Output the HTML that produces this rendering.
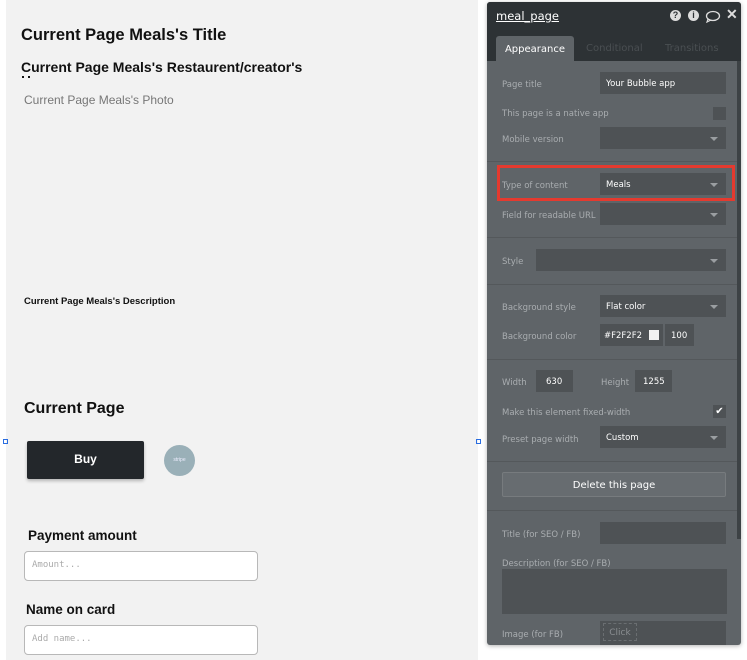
<!DOCTYPE html>
<html><head><style>
*{box-sizing:border-box;margin:0;padding:0}
body{width:747px;height:660px;background:#fff;position:relative;overflow:hidden;font-family:"Liberation Sans",sans-serif}
.a{position:absolute}
#canvas{left:6px;top:0;width:472px;height:660px;background:#f2f2f2}
#panel{left:487px;top:2px;width:254px;height:643px;background:#5f6468;border-radius:3px;overflow:hidden;box-shadow:0 1px 4px rgba(0,0,0,.3)}
.l{font-size:8.5px;color:#a9adb0;font-family:"DejaVu Sans",sans-serif;margin-top:2px}
.in{background:#4e5255;height:22px;font-size:8.5px;color:#fff;font-family:"DejaVu Sans",sans-serif;padding-left:6px;line-height:24px}
.dd::after{content:"";position:absolute;right:8px;top:10px;border:4px solid transparent;border-top:4px solid #9a9ea1;border-bottom:0}
.hr{left:0;width:250px;height:1px;background:#54585b}
.inp{background:#fff;border:1px solid #b8b8b8;border-radius:4px;font-family:"DejaVu Sans Mono",monospace;font-size:9px;color:#aaa;padding-left:7px;line-height:26px}
</style></head><body>
<div id="canvas" class="a"></div>
<div class="a" style="left:21px;top:26px;font-size:16.5px;font-weight:bold;color:#111">Current Page Meals's Title</div>
<div class="a" style="left:21px;top:59px;font-size:14px;font-weight:bold;color:#111;height:17px;overflow:hidden;width:300px;white-space:nowrap">Current Page Meals's Restaurent/creator's</div>
<div class="a" style="left:22px;top:76px;width:2px;height:2px;background:#111"></div>
<div class="a" style="left:28px;top:76px;width:2px;height:2px;background:#111"></div>
<div class="a" style="left:24px;top:93px;font-size:12px;color:#777">Current Page Meals's Photo</div>
<div class="a" style="left:24px;top:296px;font-size:9.5px;font-weight:bold;color:#111">Current Page Meals's Description</div>
<div class="a" style="left:24px;top:400px;font-size:16px;font-weight:bold;color:#111">Current Page</div>
<div class="a" style="left:3px;top:439px;width:5px;height:5px;border:1px solid #2a6de0"></div>
<div class="a" style="left:476px;top:439px;width:5px;height:5px;border:1px solid #2a6de0"></div>
<div class="a" style="left:27px;top:441px;width:117px;height:38px;background:#23272b;border-radius:2px;box-shadow:0 2px 3px rgba(0,0,0,.25);color:#fff;font-weight:bold;font-size:12px;text-align:center;line-height:36px">Buy</div>
<div class="a" style="left:164px;top:445px;width:31px;height:31px;border-radius:50%;background:#9ab0b8;color:#eef;font-size:5px;text-align:center;line-height:31px">stripe</div>
<div class="a" style="left:28px;top:528px;font-size:13.5px;font-weight:bold;color:#111">Payment amount</div>
<div class="a inp" style="left:24px;top:551px;width:234px;height:30px">Amount...</div>
<div class="a" style="left:26px;top:602px;font-size:13.5px;font-weight:bold;color:#111">Name on card</div>
<div class="a inp" style="left:24px;top:625px;width:234px;height:30px">Add name...</div>

<div id="panel" class="a">
<div class="a" style="left:0;top:0;width:254px;height:59px;background:#2d3235"></div>
<div class="a" style="left:9px;top:7px;font-size:11.5px;color:#fff;text-decoration:underline;font-family:'DejaVu Sans',sans-serif">meal_page</div>
<div class="a" style="left:183px;top:8px;width:11px;height:11px;border-radius:50%;background:#ddd;color:#2d3235;font-size:9px;font-weight:bold;text-align:center;line-height:11px">?</div>
<div class="a" style="left:201px;top:8px;width:11px;height:11px;border-radius:50%;background:#ddd;color:#2d3235;font-size:9px;font-weight:bold;text-align:center;line-height:11px">i</div>
<svg class="a" style="left:218px;top:8px" width="16" height="13"><ellipse cx="8" cy="6" rx="6.5" ry="4.5" fill="none" stroke="#ddd" stroke-width="1.3"/><path d="M3 9 L2 12 L6 10" fill="none" stroke="#ddd" stroke-width="1.2"/></svg>
<div class="a" style="left:239px;top:4px;font-size:14px;color:#ddd;font-weight:bold">✕</div>
<div class="a" style="left:9px;top:34px;width:78px;height:25px;background:#5f6468;border-radius:3px 3px 0 0;color:#fff;font-size:10px;text-align:center;line-height:27px;font-family:'DejaVu Sans',sans-serif">Appearance</div>
<div class="a" style="left:99px;top:41px;font-size:10px;color:#4a4f52;font-family:'DejaVu Sans',sans-serif">Conditional</div>
<div class="a" style="left:178px;top:41px;font-size:10px;color:#4a4f52;font-family:'DejaVu Sans',sans-serif">Transitions</div>
<div class="a" style="left:250px;top:59px;width:4px;height:478px;background:#3d4245"></div>

<div class="a l" style="left:15px;top:76px">Page title</div>
<div class="a in" style="left:113px;top:70px;width:126px">Your Bubble app</div>
<div class="a l" style="left:15px;top:105px">This page is a native app</div>
<div class="a" style="left:226px;top:105px;width:13px;height:13px;background:#4e5255"></div>
<div class="a l" style="left:15px;top:131px">Mobile version</div>
<div class="a in dd" style="left:113px;top:125px;width:126px"></div>
<div class="a hr" style="top:159px"></div>
<div class="a" style="left:10px;top:163px;width:238px;height:36px;border:3px solid #e53a2f"></div>
<div class="a l" style="left:15px;top:177px">Type of content</div>
<div class="a in dd" style="left:113px;top:171px;width:126px">Meals</div>
<div class="a l" style="left:15px;top:207px">Field for readable URL</div>
<div class="a in dd" style="left:113px;top:201px;width:126px"></div>
<div class="a hr" style="top:235px"></div>
<div class="a l" style="left:15px;top:253px">Style</div>
<div class="a in dd" style="left:49px;top:247px;width:190px"></div>
<div class="a hr" style="top:282px"></div>
<div class="a l" style="left:15px;top:299px">Background style</div>
<div class="a in dd" style="left:113px;top:293px;width:126px">Flat color</div>
<div class="a l" style="left:15px;top:328px">Background color</div>
<div class="a in" style="left:113px;top:322px;width:63px;padding-left:4px">#F2F2F2</div>
<div class="a" style="left:162px;top:328px;width:10px;height:10px;background:#f2f2f2"></div>
<div class="a in" style="left:178px;top:322px;width:29px">100</div>
<div class="a hr" style="top:357px"></div>
<div class="a l" style="left:15px;top:374px">Width</div>
<div class="a in" style="left:49px;top:368px;width:37px;padding-left:10px">630</div>
<div class="a l" style="left:114px;top:374px">Height</div>
<div class="a in" style="left:148px;top:368px;width:37px;padding-left:8px">1255</div>
<div class="a l" style="left:15px;top:404px">Make this element fixed-width</div>
<div class="a" style="left:226px;top:403px;width:13px;height:13px;background:#4e5255;color:#fff;font-size:10px;text-align:center;line-height:13px">✔</div>
<div class="a l" style="left:15px;top:431px">Preset page width</div>
<div class="a in dd" style="left:113px;top:424px;width:126px">Custom</div>
<div class="a hr" style="top:459px"></div>
<div class="a" style="left:15px;top:470px;width:224px;height:25px;background:#676c70;border:1px solid #777b7e;border-radius:2px;color:#fff;font-size:10px;text-align:center;line-height:25px;font-family:'DejaVu Sans',sans-serif">Delete this page</div>
<div class="a hr" style="top:508px"></div>
<div class="a l" style="left:15px;top:526px">Title (for SEO / FB)</div>
<div class="a in" style="left:113px;top:520px;width:126px"></div>
<div class="a l" style="left:15px;top:555px">Description (for SEO / FB)</div>
<div class="a" style="left:15px;top:567px;width:225px;height:45px;background:#4e5255"></div>
<div class="a l" style="left:15px;top:626px">Image (for FB)</div>
<div class="a in" style="left:113px;top:619px;width:126px;height:24px"></div>
<div class="a" style="left:116px;top:621px;width:34px;height:18px;border:1px dashed #6a6e71;color:#8a8e91;font-size:9px;text-align:center;line-height:18px;font-family:'DejaVu Sans',sans-serif">Click</div>
</div>
</body></html>
